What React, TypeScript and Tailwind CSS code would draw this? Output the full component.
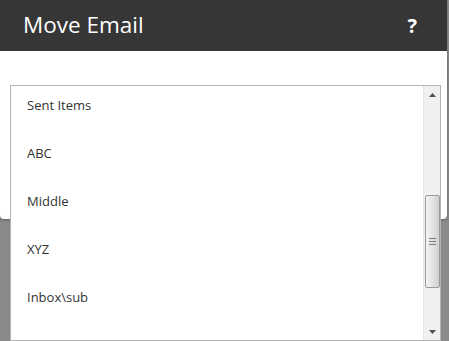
// Move Email dialog with open folder list

const FOLDERS = ["Sent Items", "ABC", "Middle", "XYZ", "Inbox\\sub"];

function ScrollBar()
{
    return (
        <div className="flex h-full w-[17px] flex-col items-center border-l border-[#e6e6e6] bg-[#f0f0f0]">
            <div className="flex h-[17px] w-full items-center justify-center">
                <svg width="7" height="4" viewBox="0 0 7 4"><path d="M3.5 0 L7 4 L0 4 Z" fill="#505050" /></svg>
            </div>
            <div className="h-[92px] shrink-0" />
            <div className="flex h-[93px] w-[15px] shrink-0 items-center justify-center rounded-[2px] border border-[#9a9a9a] bg-gradient-to-r from-[#f4f4f4] via-[#e4e4e4] to-[#d0d0d0]">
                <div className="flex flex-col gap-[2px]">
                    <div className="h-px w-[7px] bg-[#7a7a7a]" />
                    <div className="h-px w-[7px] bg-[#7a7a7a]" />
                    <div className="h-px w-[7px] bg-[#7a7a7a]" />
                </div>
            </div>
            <div className="flex-1" />
            <div className="flex h-[17px] w-full items-center justify-center">
                <svg width="7" height="4" viewBox="0 0 7 4"><path d="M0 0 L7 0 L3.5 4 Z" fill="#505050" /></svg>
            </div>
        </div>
    );
}

export default function App()
{
    return (
        <div className="relative h-[341px] w-[449px] overflow-hidden bg-[#8a8a8a]" style={{ fontFamily: "'Open Sans', 'Noto Sans', sans-serif" }}>
            {/* dialog */}
            <div className="w-[447px] overflow-hidden rounded-b-[4px] bg-white shadow-[0_1px_3px_rgba(0,0,0,0.3)]">
                <div className="flex h-[51px] items-center justify-between bg-[#363636] pl-[23px] pr-[30px]">
                    <span className="text-[22.5px] leading-none text-white">Move Email</span>
                    <span className="text-[20px] font-bold leading-none text-white">?</span>
                </div>
                <div className="h-[168px]" />
            </div>

            {/* folder list popup */}
            <div className="absolute left-[10px] top-[85px] flex h-[256px] w-[431px] overflow-hidden border border-[#b4b4b4] bg-white">
                <div className="-mt-[4px] flex-1">
                    {FOLDERS.map((tName) => (
                        <div key={tName} className="flex h-[48px] items-center pl-[16px] text-[13px] text-[#333333]">
                            {tName}
                        </div>
                    ))}
                </div>
                <ScrollBar />
            </div>
        </div>
    );
}
